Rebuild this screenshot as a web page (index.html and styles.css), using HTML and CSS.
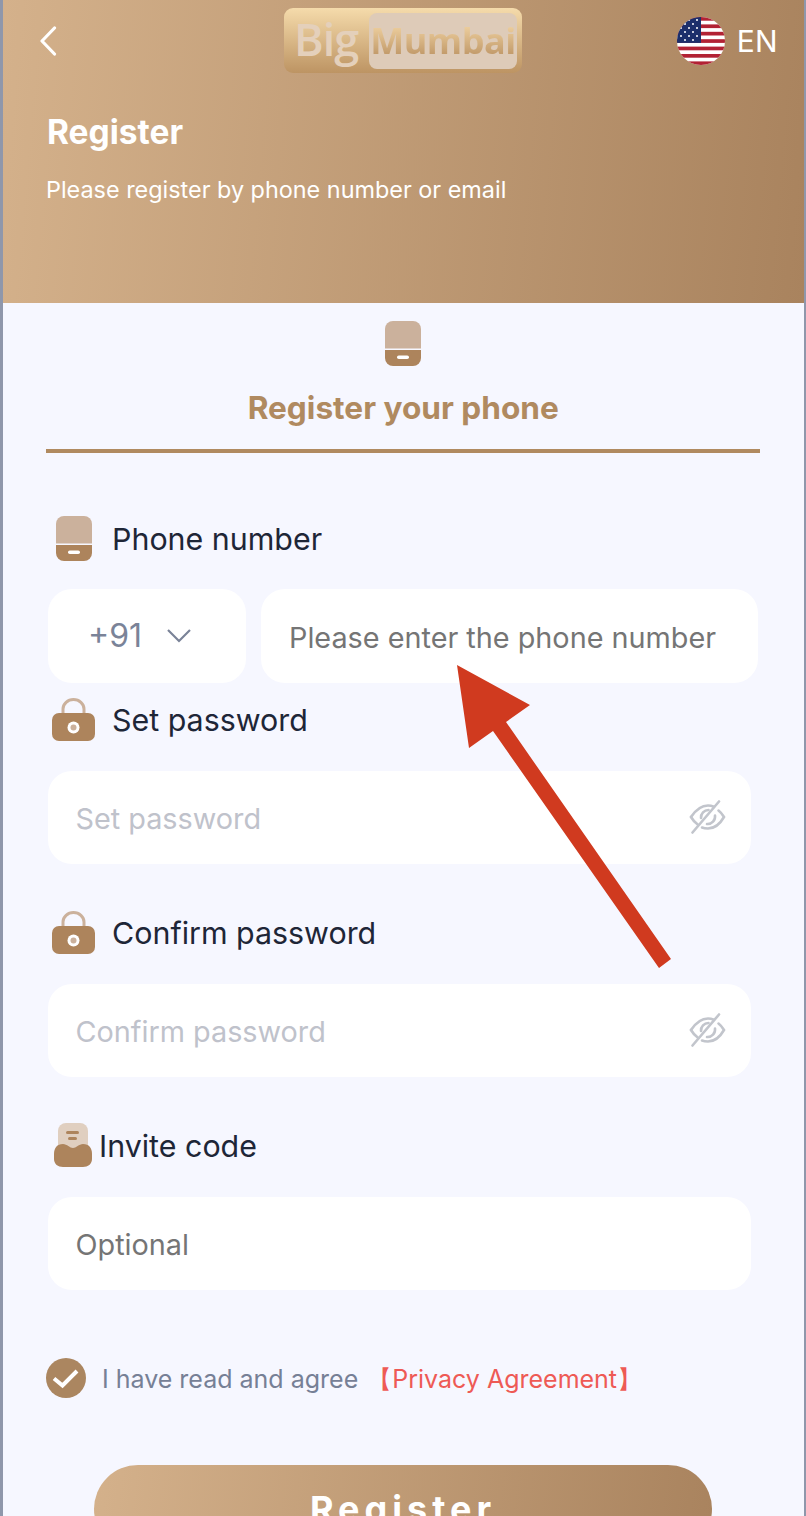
FILE: index.html
```html
<!DOCTYPE html>
<html lang="en">
<head>
<meta charset="utf-8">
<title>Register</title>
<link rel="stylesheet" href="styles.css">
</head>
<body>
<main class="app">
  <header class="hero">
    <div class="topbar">
      <svg class="back" viewBox="0 0 18 30" width="18" height="30"><path d="M15.500 2 L3 15 L15.500 28" fill="none" stroke="#fff" stroke-width="3.200" stroke-linecap="round" stroke-linejoin="round"/></svg>
      <div class="logo">
        <span class="logo-big">Big</span>
        <span class="logo-box"><span class="logo-mumbai">Mumbai</span></span>
      </div>
      <div class="lang">
        <svg class="flag" viewBox="0 0 48 48" width="48" height="48">
          <defs><clipPath id="flagclip"><circle cx="24" cy="24" r="24"/></clipPath></defs>
          <g clip-path="url(#flagclip)">
            <rect width="48" height="48" fill="#fff"/>
            <rect y="0" width="48" height="3.700" fill="#b22234"/>
            <rect y="7.400" width="48" height="3.700" fill="#b22234"/>
            <rect y="14.800" width="48" height="3.700" fill="#b22234"/>
            <rect y="22.200" width="48" height="3.700" fill="#b22234"/>
            <rect y="29.600" width="48" height="3.700" fill="#b22234"/>
            <rect y="37" width="48" height="3.700" fill="#b22234"/>
            <rect y="44.400" width="48" height="3.700" fill="#b22234"/>
            <rect width="24" height="25.900" fill="#1c2f6b"/>
            <g fill="#fff">
              <circle cx="12" cy="3" r="1"/><circle cx="20" cy="3" r="1"/>
              <circle cx="8" cy="7" r="1"/><circle cx="16" cy="7" r="1"/>
              <circle cx="4" cy="11" r="1"/><circle cx="12" cy="11" r="1"/><circle cx="20" cy="11" r="1"/>
              <circle cx="8" cy="15" r="1"/><circle cx="16" cy="15" r="1"/>
              <circle cx="4" cy="19" r="1"/><circle cx="12" cy="19" r="1"/><circle cx="20" cy="19" r="1"/>
              <circle cx="8" cy="23" r="1"/><circle cx="16" cy="23" r="1"/>
            </g>
          </g>
        </svg>
        <span class="lang-code">EN</span>
      </div>
    </div>
    <h1 class="hero-title">Register</h1>
    <p class="hero-sub">Please register by phone number or email</p>
  </header>

  <section class="tab">
    <svg class="tab-icon" viewBox="0 0 36 45" width="36" height="45"><use href="#phone-shape"/></svg>
    <div class="tab-label">Register your phone</div>
    <div class="tab-line"></div>
  </section>

  <svg class="sprite" width="0" height="0">
    <defs>
      <g id="phone-shape">
        <path d="M8 0 H28 A8 8 0 0 1 36 8 V27.500 H0 V8 A8 8 0 0 1 8 0 Z" fill="#cbb19c"/>
        <path d="M0 29 H36 V37 A8 8 0 0 1 28 45 H8 A8 8 0 0 1 0 37 Z" fill="#ad845c"/>
        <rect x="12" y="34.500" width="12" height="3.500" rx="1.750" fill="#fff"/>
      </g>
      <g id="lock-shape">
        <path d="M11 16 V11 A10.500 9.500 0 0 1 32 11 V16" fill="none" stroke="#cbb19c" stroke-width="3"/>
        <rect x="0" y="15" width="43" height="28" rx="7" fill="#ad845c"/>
        <circle cx="21.500" cy="29.500" r="6" fill="#fff"/>
        <circle cx="21.500" cy="29.500" r="3" fill="#cbb19c"/>
      </g>
      <g id="eye-shape" fill="none" stroke="#c2c5cc" stroke-width="2.600" stroke-linecap="round">
        <path d="M2 17 C8 8 14 5.500 19 5.500 C21 5.500 23 6 25 6.800"/>
        <path d="M2 17 C4 20.500 6.500 23 9 24.800"/>
        <path d="M13 27.500 C15 28.300 17 28.500 19 28.500 C25 28.500 31 24 35 17 C33.500 14.500 31.500 12 29.500 10.500"/>
        <path d="M12 18 A7.500 7.500 0 0 1 19.500 10"/>
        <path d="M26 15.500 A7.500 7.500 0 0 1 18 24"/>
        <path d="M3.500 32.500 L30 1.500"/>
      </g>
    </defs>
  </svg>

  <form class="form">
    <div class="field field-phone">
      <div class="label label-phone">
        <svg viewBox="0 0 36 45" width="36" height="45"><use href="#phone-shape"/></svg>
        <span>Phone number</span>
      </div>
      <div class="phone-row">
        <div class="control code">
          <span>+91</span>
          <svg viewBox="0 0 26 15" width="26" height="15"><path d="M2 2 L13 13 L24 2" fill="none" stroke="#7a8398" stroke-width="2.200"/></svg>
        </div>
        <div class="control number"><span class="ph-dark">Please enter the phone number</span></div>
      </div>
    </div>

    <div class="field field-set">
      <div class="label label-lock">
        <svg viewBox="0 0 43 43" width="43" height="43"><use href="#lock-shape"/></svg>
        <span>Set password</span>
      </div>
      <div class="control wide">
        <span class="ph-light">Set password</span>
        <svg viewBox="0 0 37 34" width="37" height="34"><use href="#eye-shape"/></svg>
      </div>
    </div>

    <div class="field field-confirm">
      <div class="label label-lock">
        <svg viewBox="0 0 43 43" width="43" height="43"><use href="#lock-shape"/></svg>
        <span>Confirm password</span>
      </div>
      <div class="control wide">
        <span class="ph-light">Confirm password</span>
        <svg viewBox="0 0 37 34" width="37" height="34"><use href="#eye-shape"/></svg>
      </div>
    </div>

    <div class="field field-invite">
      <div class="label label-invite">
        <svg viewBox="0 0 40 44" width="40" height="44">
          <rect x="5" y="0" width="30" height="34" rx="8" fill="#e0cfc0"/>
          <rect x="13" y="8" width="13" height="3" rx="1.500" fill="#ad845c"/>
          <rect x="15" y="14" width="9" height="3" rx="1.500" fill="#ad845c"/>
          <path d="M10 21 C14 21 17 25 20 25 C23 25 26 21 30 21 C36 21 39 25 39 31 V36 C39 41 35 44 30 44 H10 C5 44 1 41 1 36 V31 C1 25 4 21 10 21 Z" fill="#ad845c"/>
        </svg>
        <span>Invite code</span>
      </div>
      <div class="control wide"><span class="ph-dark">Optional</span></div>
    </div>

    <div class="agree">
      <svg viewBox="0 0 40 40" width="40" height="40"><circle cx="20" cy="20" r="20" fill="#ab8660"/><path d="M8 20.500 L16.500 27.500 L31 13" fill="none" stroke="#fff" stroke-width="4"/></svg>
      <span class="agree-text">I have read and agree</span>
      <span class="agree-link">【Privacy Agreement】</span>
    </div>

    <button class="submit" type="button">Register</button>
  </form>

  <svg class="arrow" viewBox="0 0 806 1516" width="806" height="1516"><polygon points="457,665 530,705 506,722 671,959 659,968 493,731 469,748" fill="#d03a1f"/></svg>
</main>
</body>
</html>
```

FILE: styles.css
```css
* { box-sizing: border-box; }
html, body { margin: 0; height: 100%; overflow: hidden; }
body {
  background: #8f97ab;
  font-family: Inter, "Liberation Sans", sans-serif;
  color: #1e2637;
}
.app {
  margin: 0 2.500px 0 3px;
  height: 1516px;
  background: #f6f7ff;
  overflow: hidden;
}
.hero {
  height: 303px;
  background: linear-gradient(95deg, #d4b18b 0%, #a9835e 100%);
  color: #fff;
  padding: 8px 26px 0 36px;
}
.topbar {
  display: flex;
  align-items: center;
  height: 65px;
}
.back { flex: none; }
.logo {
  display: flex;
  align-items: center;
  justify-content: space-between;
  width: 238px;
  height: 65px;
  margin-left: 227px;
  padding: 5px 5px 4px 10px;
  border-radius: 9px;
  background: linear-gradient(180deg, #f5dbab 0%, #bd9463 100%);
}
.logo-big {
  font-family: "Open Sans", sans-serif;
  font-size: 45px;
  font-weight: 600;
  letter-spacing: -1px;
  color: #e4d0bb;
  line-height: 1;
  margin-top: -6px;
}
.logo-box {
  display: flex;
  align-items: center;
  justify-content: center;
  width: 148px;
  height: 56px;
  border-radius: 8px;
  background: #decbb8;
}
.logo-mumbai {
  font-family: "Open Sans", sans-serif;
  font-size: 36px;
  font-weight: 700;
  letter-spacing: -0.500px;
  line-height: 1.100;
  background: linear-gradient(180deg, #f4d7a6 0%, #b88f5f 100%);
  -webkit-background-clip: text;
  background-clip: text;
  color: transparent;
}
.lang {
  display: flex;
  align-items: center;
  gap: 12px;
  margin-left: auto;
  margin-top: 1px;
}
.flag { flex: none; }
.lang-code { font-size: 30px; line-height: 1; }
.hero-title {
  margin: 37px 0 0 8px;
  font-size: 33.500px;
  font-weight: 700;
  line-height: 44px;
}
.hero-sub {
  margin: 21px 0 0 7px;
  font-size: 23.400px;
  line-height: 30px;
}
.tab {
  display: flex;
  flex-direction: column;
  align-items: center;
  padding-top: 18px;
}
.tab-icon { flex: none; }
.tab-label {
  margin-top: 20px;
  font-size: 31.600px;
  font-weight: 700;
  line-height: 44px;
  color: #b08a60;
}
.tab-line {
  align-self: stretch;
  height: 4px;
  margin: 19px 44px 0 43px;
  background: #b08a60;
}
.sprite { position: absolute; }
.form { padding: 0 0 0 45px; }
.field { width: 703px; }
.field-phone { padding-top: 63px; width: 710px; }
.field-set { padding-top: 15px; }
.field-confirm { padding-top: 46.500px; }
.field-invite { padding-top: 46.500px; }
.label {
  display: flex;
  align-items: center;
  font-size: 30.400px;
  font-weight: 400;
  line-height: 45px;
  height: 45px;
}
.label span { flex: none; padding-top: 2px; }
.label-phone { padding-left: 8px; gap: 20px; }
.label-lock { padding-left: 4px; gap: 17px; height: 43px; margin-bottom: 30px; }
.label-invite { padding-left: 5px; gap: 6px; height: 43px; margin-bottom: 30px; }
.phone-row {
  display: flex;
  gap: 15px;
  margin-top: 28px;
}
.control {
  display: flex;
  align-items: center;
  height: 93.500px;
  border-radius: 24px;
  background: #fff;
  font-size: 28.800px;
}
.code {
  flex: none;
  width: 198px;
  padding-left: 40px;
  gap: 24px;
  color: #7a8398;
  font-size: 32px;
}
.number { flex: 1; padding-left: 28px; }
.number span { padding-top: 4px; }
.wide {
  justify-content: space-between;
  padding: 0 25px 0 27.500px;
}
.wide span { padding-top: 2px; }
.ph-dark { color: #757575; }
.ph-light { color: #bfc2cb; }
.agree {
  display: flex;
  align-items: center;
  height: 40px;
  margin: 67.500px 0 0 -2px;
  font-size: 25px;
}
.agree span { padding-top: 3px; }
.agree-text { margin-left: 16px; color: #768096; }
.agree-link { margin-left: 9px; color: #ee5a55; }
.submit {
  display: block;
  width: 618px;
  height: 88px;
  margin: 67px 0 0 46px;
  border: 0;
  border-radius: 44px;
  background: linear-gradient(97deg, #d4b18b 0%, #a9835e 100%);
  color: #fff;
  font-family: Inter, sans-serif;
  font-size: 36px;
  font-weight: 700;
  letter-spacing: 5px;
  padding: 0;
}
.arrow {
  position: absolute;
  left: 0;
  top: 0;
  pointer-events: none;
}
```
